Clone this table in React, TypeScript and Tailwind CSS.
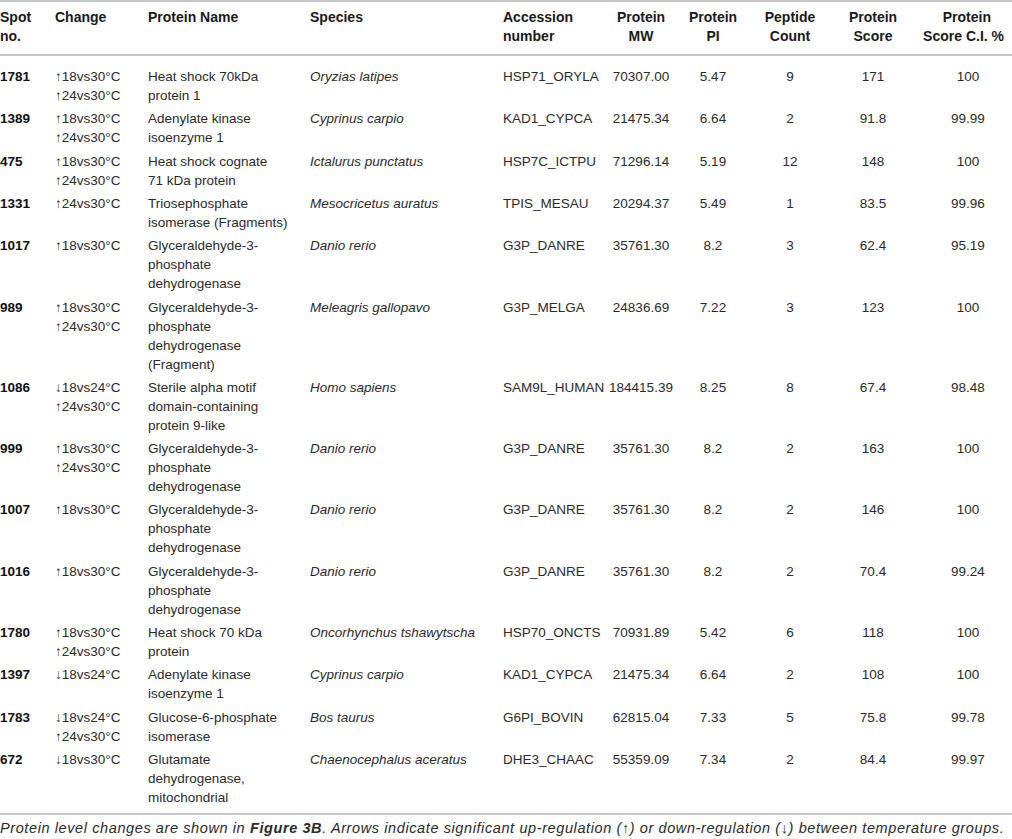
const cols = 'grid grid-cols-[55px_93px_162px_193px_102px_72px_72px_82px_84px_97px]';

type Row = {
  spot: string;
  change: string[];
  name: string[];
  species: string;
  acc: string;
  mw: string;
  pi: string;
  pep: string;
  score: string;
  ci: string;
};

const rows: Row[] = [
  { spot: '1781', change: ['↑18vs30°C', '↑24vs30°C'], name: ['Heat shock 70kDa', 'protein 1'], species: 'Oryzias latipes', acc: 'HSP71_ORYLA', mw: '70307.00', pi: '5.47', pep: '9', score: '171', ci: '100' },
  { spot: '1389', change: ['↑18vs30°C', '↑24vs30°C'], name: ['Adenylate kinase', 'isoenzyme 1'], species: 'Cyprinus carpio', acc: 'KAD1_CYPCA', mw: '21475.34', pi: '6.64', pep: '2', score: '91.8', ci: '99.99' },
  { spot: '475', change: ['↑18vs30°C', '↑24vs30°C'], name: ['Heat shock cognate', '71 kDa protein'], species: 'Ictalurus punctatus', acc: 'HSP7C_ICTPU', mw: '71296.14', pi: '5.19', pep: '12', score: '148', ci: '100' },
  { spot: '1331', change: ['↑24vs30°C'], name: ['Triosephosphate', 'isomerase (Fragments)'], species: 'Mesocricetus auratus', acc: 'TPIS_MESAU', mw: '20294.37', pi: '5.49', pep: '1', score: '83.5', ci: '99.96' },
  { spot: '1017', change: ['↑18vs30°C'], name: ['Glyceraldehyde-3-', 'phosphate', 'dehydrogenase'], species: 'Danio rerio', acc: 'G3P_DANRE', mw: '35761.30', pi: '8.2', pep: '3', score: '62.4', ci: '95.19' },
  { spot: '989', change: ['↑18vs30°C', '↑24vs30°C'], name: ['Glyceraldehyde-3-', 'phosphate', 'dehydrogenase', '(Fragment)'], species: 'Meleagris gallopavo', acc: 'G3P_MELGA', mw: '24836.69', pi: '7.22', pep: '3', score: '123', ci: '100' },
  { spot: '1086', change: ['↓18vs24°C', '↑24vs30°C'], name: ['Sterile alpha motif', 'domain-containing', 'protein 9-like'], species: 'Homo sapiens', acc: 'SAM9L_HUMAN', mw: '184415.39', pi: '8.25', pep: '8', score: '67.4', ci: '98.48' },
  { spot: '999', change: ['↑18vs30°C', '↑24vs30°C'], name: ['Glyceraldehyde-3-', 'phosphate', 'dehydrogenase'], species: 'Danio rerio', acc: 'G3P_DANRE', mw: '35761.30', pi: '8.2', pep: '2', score: '163', ci: '100' },
  { spot: '1007', change: ['↑18vs30°C'], name: ['Glyceraldehyde-3-', 'phosphate', 'dehydrogenase'], species: 'Danio rerio', acc: 'G3P_DANRE', mw: '35761.30', pi: '8.2', pep: '2', score: '146', ci: '100' },
  { spot: '1016', change: ['↑18vs30°C'], name: ['Glyceraldehyde-3-', 'phosphate', 'dehydrogenase'], species: 'Danio rerio', acc: 'G3P_DANRE', mw: '35761.30', pi: '8.2', pep: '2', score: '70.4', ci: '99.24' },
  { spot: '1780', change: ['↑18vs30°C', '↑24vs30°C'], name: ['Heat shock 70 kDa', 'protein'], species: 'Oncorhynchus tshawytscha', acc: 'HSP70_ONCTS', mw: '70931.89', pi: '5.42', pep: '6', score: '118', ci: '100' },
  { spot: '1397', change: ['↓18vs24°C'], name: ['Adenylate kinase', 'isoenzyme 1'], species: 'Cyprinus carpio', acc: 'KAD1_CYPCA', mw: '21475.34', pi: '6.64', pep: '2', score: '108', ci: '100' },
  { spot: '1783', change: ['↓18vs24°C', '↑24vs30°C'], name: ['Glucose-6-phosphate', 'isomerase'], species: 'Bos taurus', acc: 'G6PI_BOVIN', mw: '62815.04', pi: '7.33', pep: '5', score: '75.8', ci: '99.78' },
  { spot: '672', change: ['↓18vs30°C'], name: ['Glutamate', 'dehydrogenase,', 'mitochondrial'], species: 'Chaenocephalus aceratus', acc: 'DHE3_CHAAC', mw: '55359.09', pi: '7.34', pep: '2', score: '84.4', ci: '99.97' },
];

function Lines({ items }: { items: string[] }) {
  return (
    <div>
      {items.map((t) => (
        <div key={t} className="whitespace-nowrap">
          {t}
        </div>
      ))}
    </div>
  );
}

export default function App() {
  return (
    <div className="w-[1012px] bg-white font-['Liberation_Sans',Arial,sans-serif] text-[#2a2a2a]">
      {/* Header */}
      <div className={`${cols} border-t-2 border-b-2 border-[#c8c8c8] pt-[6px] pb-[8px] text-[14px] font-bold leading-[19px] text-[#1a1a1a]`}>
        <Lines items={['Spot', 'no.']} />
        <div>Change</div>
        <div>Protein Name</div>
        <div>Species</div>
        <Lines items={['Accession', 'number']} />
        <div className="text-center">Protein<br />MW</div>
        <div className="text-center">Protein<br />PI</div>
        <div className="text-center">Peptide<br />Count</div>
        <div className="text-center">Protein<br />Score</div>
        <div className="flex flex-col items-end pr-[8px]">
          <span className="pr-[13px]">Protein</span>
          <span className="whitespace-nowrap">Score C.I. %</span>
        </div>
      </div>

      {/* Body */}
      <div className="border-b-2 border-[#c8c8c8] pt-[9px] pb-[4px] text-[13.5px] leading-[19px]">
        {rows.map((r) => (
          <div key={r.spot} className={`${cols} py-[2.15px]`}>
            <div className="font-bold text-[#111]">{r.spot}</div>
            <Lines items={r.change} />
            <Lines items={r.name} />
            <div className="italic whitespace-nowrap">{r.species}</div>
            <div className="whitespace-nowrap">{r.acc}</div>
            <div className="text-center">{r.mw}</div>
            <div className="text-center">{r.pi}</div>
            <div className="text-center">{r.pep}</div>
            <div className="text-center">{r.score}</div>
            <div className="pl-[9px] text-center">{r.ci}</div>
          </div>
        ))}
      </div>

      {/* Footnote */}
      <p className="whitespace-nowrap pt-[5px] text-[14.5px] italic leading-[17px] tracking-[0.6px] text-[#2a2a2a]">
        Protein level changes are shown in <span className="font-bold">Figure 3B</span>. Arrows indicate significant
        up-regulation (↑) or down-regulation (↓) between temperature groups.
      </p>
    </div>
  );
}
